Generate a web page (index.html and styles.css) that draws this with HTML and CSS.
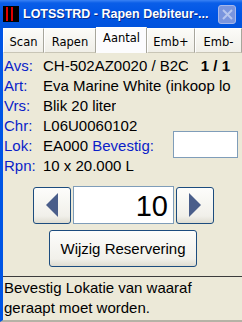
FILE: index.html
```html
<!DOCTYPE html>
<html lang="nl">
  <head>
    <meta charset="UTF-8" />
    <meta name="viewport" content="width=device-width, initial-scale=1.0" />
    <title>LOTSSTRD - Rapen Debiteur</title>
    <link rel="stylesheet" href="styles.css">
  </head>
  <body>
    <div class="window">
      <header class="titlebar">
        <svg class="app-icon" width="16" height="16" viewBox="0 0 16 16">
          <rect x="0" y="0" width="16" height="16" fill="#000" />
          <rect x="3" y="1" width="2" height="14" fill="#e00000" />
          <rect x="8" y="1" width="2" height="14" fill="#e00000" />
        </svg>
        <span class="title">LOTSSTRD - Rapen Debiteur-...</span>
        <span class="close">
          <svg width="11" height="11" viewBox="0 0 11 11">
            <path d="M1 1 L10 10 M10 1 L1 10" stroke="#b7c6ee" stroke-width="2" />
          </svg>
        </span>
      </header>
      <div class="frame">
        <ul class="tabs">
          <li class="tab tab-scan">Scan</li>
          <li class="tab tab-rapen">Rapen</li>
          <li class="tab tab-aantal active">Aantal</li>
          <li class="tab tab-embp">Emb+</li>
          <li class="tab tab-embm">Emb-</li>
        </ul>
        <div class="fields">
          <div class="row">
            <span class="label">Avs:</span>
            <span class="value clip">CH-502AZ0020 / B2C</span>
            <span class="count">1 / 1</span>
          </div>
          <div class="row">
            <span class="label">Art:</span>
            <span class="value">Eva Marine White (inkoop lo</span>
          </div>
          <div class="row">
            <span class="label">Vrs:</span>
            <span class="value">Blik 20 liter</span>
          </div>
          <div class="row">
            <span class="label">Chr:</span>
            <span class="value">L06U0060102</span>
          </div>
          <div class="row">
            <span class="label">Lok:</span>
            <span class="value">EA000 <span class="hint">Bevestig:</span></span>
            <input class="confirm" type="text" />
          </div>
          <div class="row">
            <span class="label">Rpn:</span>
            <span class="value">10 x 20.000 L</span>
          </div>
        </div>
        <div class="spinner">
          <button class="arrow" type="button">
            <svg width="12" height="24" viewBox="0 0 12 24"><polygon points="12,0 12,24 0,12" fill="#4a5e8a" /></svg>
          </button>
          <div class="amount">10</div>
          <button class="arrow" type="button">
            <svg width="12" height="24" viewBox="0 0 12 24"><polygon points="0,0 0,24 12,12" fill="#4a5e8a" /></svg>
          </button>
        </div>
        <div class="action">
          <button class="wide" type="button">Wijzig Reservering</button>
        </div>
        <footer class="status">
          <p>Bevestig Lokatie van waaraf geraapt moet worden.</p>
        </footer>
      </div>
    </div>
  </body>
</html>
```

FILE: styles.css
```css
* {
  margin: 0;
  padding: 0;
  box-sizing: border-box;
}
body {
  width: 242px;
  height: 322px;
  overflow: hidden;
  background-color: #ece9d8;
  font-family: "Liberation Sans", Arial, sans-serif;
  font-size: 15px;
  color: #000;
}
.window {
  width: 242px;
  height: 322px;
  display: flex;
  flex-flow: column;
}
/* titelbalk in XP stijl */
.titlebar {
  height: 28px;
  flex-shrink: 0;
  display: flex;
  align-items: center;
  padding-left: 3px;
  background: linear-gradient(#3a82f4 0, #0a5ee8 3px, #0055e5 14px, #0052dc 100%);
  color: white;
}
.app-icon {
  flex-shrink: 0;
}
.title {
  margin-left: 4px;
  font-family: "Liberation Sans", Arial, sans-serif;
  font-weight: bold;
  font-size: 12.5px;
  white-space: nowrap;
  text-shadow: 1px 1px 0 #0a2a8a;
}
.close {
  flex-shrink: 0;
  margin-left: auto;
  margin-right: 6px;
  width: 18px;
  height: 19px;
  display: flex;
  align-items: center;
  justify-content: center;
  background-color: #7a95de;
  border: 1px solid #a6b7ea;
  border-radius: 3px;
}
.frame {
  flex: 1;
  display: flex;
  flex-flow: column;
  border-left: 3px solid #0055e5;
  border-bottom: 2px solid #b5b2a6;
}
/* tabbladen */
.tabs {
  display: flex;
  list-style: none;
  height: 25px;
  flex-shrink: 0;
  font-family: "DejaVu Sans", sans-serif;
  font-size: 11.5px;
}
.tab {
  display: flex;
  align-items: center;
  justify-content: center;
  padding-top: 2px;
  background: linear-gradient(#fbfbf8, #f0efe8);
  border-top: 1px solid #fff;
  border-left: 1px solid #fff;
  border-right: 1px solid #a7a69c;
  border-bottom: 1px solid #c8c5b6;
}
.tab-scan {
  width: 41px;
}
.tab-rapen {
  width: 52px;
}
.tab-aantal {
  width: 51px;
}
.tab-embp {
  width: 48px;
}
.tab-embm {
  flex: 1;
}
.tab.active {
  margin-top: -1px;
  align-items: flex-start;
  padding-top: 3px;
  background: #fcfcfe;
  border-bottom: none;
}
.fields {
  padding-top: 2px;
}
.row {
  height: 20px;
  display: flex;
  align-items: center;
  white-space: nowrap;
}
.label {
  width: 40px;
  flex-shrink: 0;
  padding-left: 1px;
  color: #0a1ec8;
}
.value {
  overflow: hidden;
}
.clip {
  width: 145px;
  flex-shrink: 0;
}
.count {
  margin-left: auto;
  margin-right: 12px;
  font-weight: bold;
}
.hint {
  color: #0a1ec8;
}
.confirm {
  margin: -4px 4px -3px auto;
  width: 65px;
  height: 27px;
  flex-shrink: 0;
  border: 1px solid #7f9db9;
  background: white;
}
/* aantal invoer */
.spinner {
  display: flex;
  align-items: center;
  gap: 2px;
  margin-top: 11px;
  padding-left: 30px;
}
.arrow {
  width: 38px;
  height: 37px;
  display: flex;
  align-items: center;
  justify-content: center;
  border: 1px solid #1c4c7e;
  border-radius: 3px;
  background: linear-gradient(#fdfdfb, #f1f0ea 80%, #dedcd1);
}
.amount {
  width: 101px;
  height: 38px;
  border: 1px solid #7f9db9;
  background: white;
  text-align: right;
  padding-right: 5px;
  font-size: 29px;
  line-height: 38px;
}
.action {
  margin-top: 6px;
  padding-left: 46px;
}
.wide {
  width: 148px;
  height: 37px;
  border: 1px solid #1c4c7e;
  border-radius: 3px;
  background: linear-gradient(#fdfdfb, #f1f0ea 80%, #dedcd1);
  font-family: "Liberation Sans", Arial, sans-serif;
  font-size: 15px;
  color: #000;
}
.status {
  margin-top: 9px;
  flex: 1;
  border-top: 1px solid #3c3c3c;
  padding: 1px 0 0 1px;
  line-height: 20px;
}
.status p {
  width: 215px;
}
```
